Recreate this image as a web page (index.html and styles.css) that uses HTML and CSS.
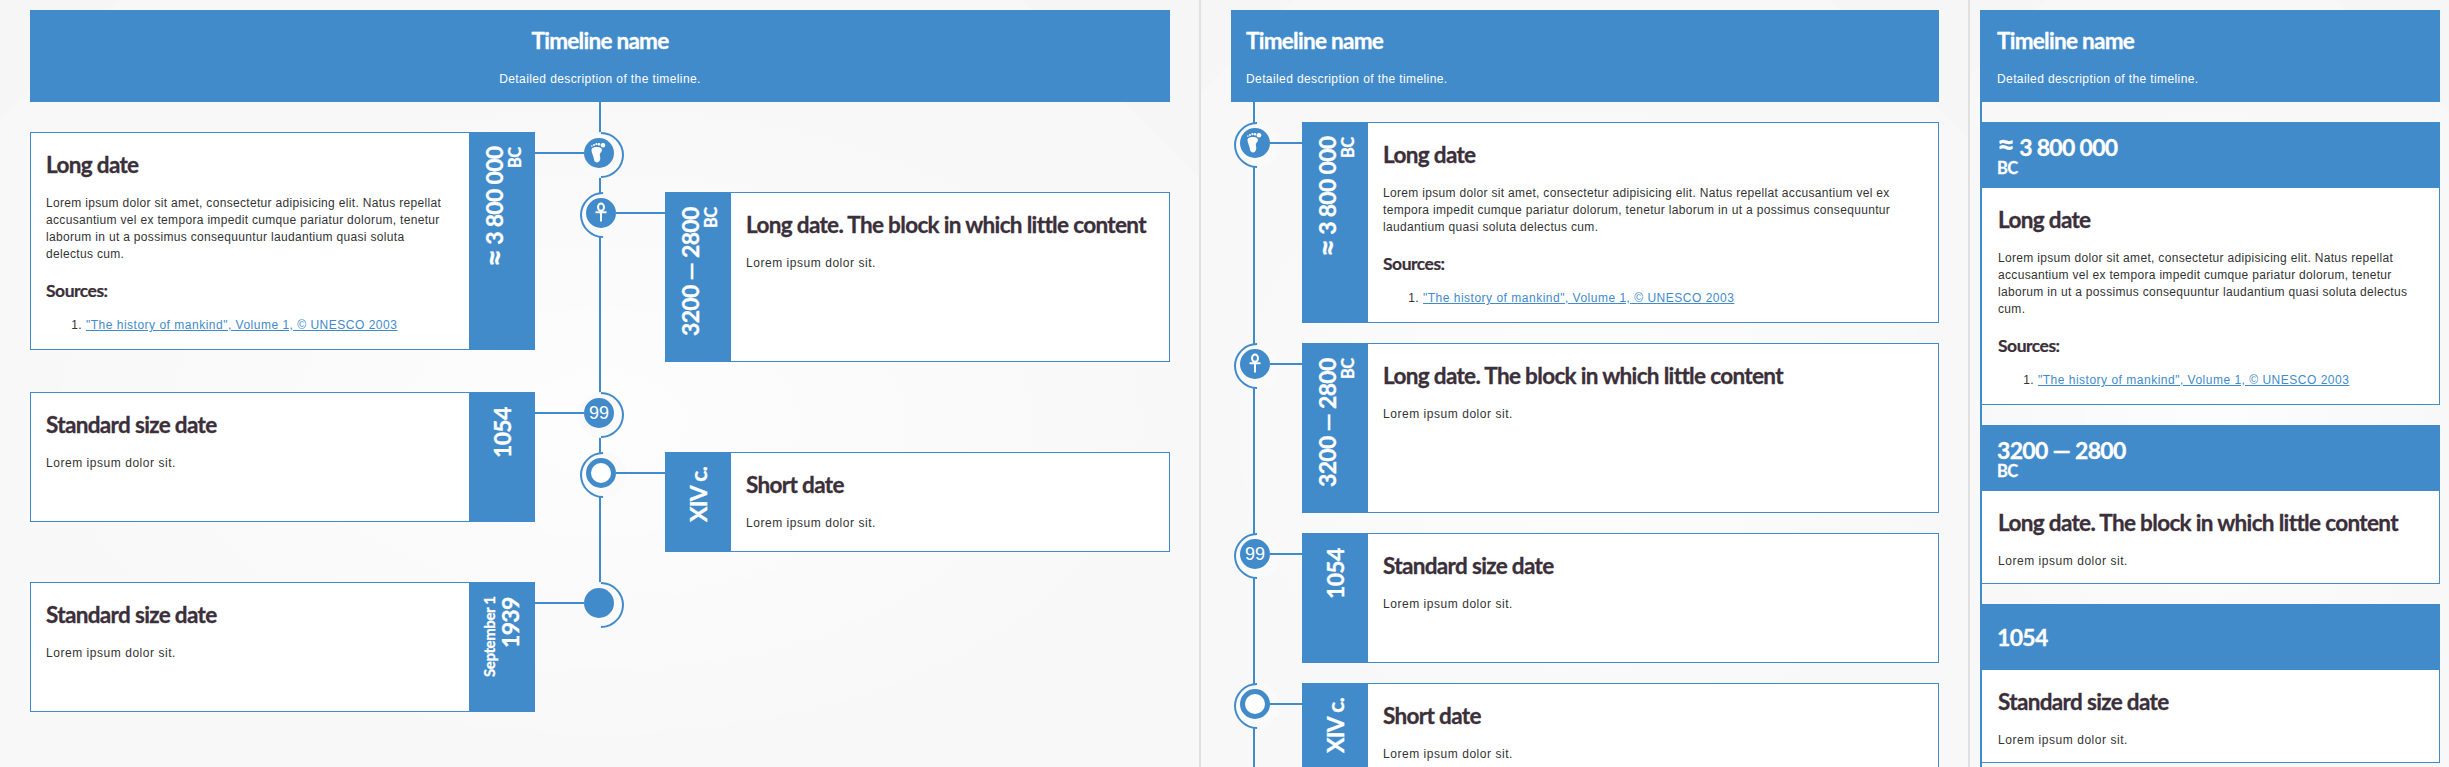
FILE: index.html
```html
<!DOCTYPE html>
<html lang="en">
<head>
<meta charset="utf-8">
<title>Timeline</title>
<link rel="stylesheet" href="styles.css">
</head>
<body>
<div class="app">

<section class="panel panel-wide">
  <header class="tl-head tl-head-center">
    <h1>Timeline name</h1>
    <p>Detailed description of the timeline.</p>
  </header>
  <div class="tl tl-two">
    <div class="tl-line tl-line-short"></div>
    <div class="col">
      <article class="event">
        <div class="card">
          <div class="body">
            <h2>Long date</h2>
            <p>Lorem ipsum dolor sit amet, consectetur adipisicing elit. Natus repellat accusantium vel ex tempora impedit cumque pariatur dolorum, tenetur laborum in ut a possimus consequuntur laudantium quasi soluta delectus cum.</p>
            <h3>Sources:</h3>
            <ol><li><a href="#">"The history of mankind", Volume 1, © UNESCO 2003</a></li></ol>
          </div>
          <div class="date"><span class="main"><b class="approx">≈</b> 3 800 000</span><span class="sub">BC</span></div>
        </div>
        <div class="node"><span class="disc"><svg class="ico" viewBox="0 0 30 30"><path d="M7.5 12C7.5 9.5 11 9 13.5 9C16 9 18 10 18 12C18 14 16 14.6 15.8 16.6C15.6 18 16.6 19.5 16.2 21.2C15.8 23.2 14.4 24.5 12.8 24.4C10.8 24.3 10 22.5 9.8 20.5C9.6 18 7.5 15 7.5 12Z"/><circle cx="19" cy="7.2" r="2.3"/><circle cx="15" cy="6.2" r="1.3"/><circle cx="12.4" cy="6.2" r="1.1"/><circle cx="10" cy="6.9" r="1"/><circle cx="7.9" cy="8.1" r=".8"/></svg></span></div>
      </article>
      <article class="event gap-42 h-130">
        <div class="card">
          <div class="body"><h2>Standard size date</h2><p class="short">Lorem ipsum dolor sit.</p></div>
          <div class="date"><span class="main">1054</span></div>
        </div>
        <div class="node"><span class="disc disc-num">99</span></div>
      </article>
      <article class="event gap-60 h-130">
        <div class="card">
          <div class="body"><h2>Standard size date</h2><p class="short">Lorem ipsum dolor sit.</p></div>
          <div class="date date-day"><span class="sub">September 1</span><span class="main">1939</span></div>
        </div>
        <div class="node"><span class="disc"></span></div>
      </article>
    </div>
    <div class="col col-right">
      <article class="event event-right h-170">
        <div class="card">
          <div class="date"><span class="main">3200 — 2800</span><span class="sub">BC</span></div>
          <div class="body"><h2>Long date. The block in which little content</h2><p class="short">Lorem ipsum dolor sit.</p></div>
        </div>
        <div class="node"><span class="disc"><svg class="ico ico-ankh" viewBox="0 0 30 30"><ellipse cx="15" cy="9.2" rx="3" ry="3.6"/><path d="M9.5 14.2H20.5M15 12V23.5"/></svg></span></div>
      </article>
      <article class="event event-right gap-90 h-100">
        <div class="card">
          <div class="date"><span class="main">XIV c.</span></div>
          <div class="body"><h2>Short date</h2><p class="short">Lorem ipsum dolor sit.</p></div>
        </div>
        <div class="node"><span class="disc disc-open"></span></div>
      </article>
    </div>
  </div>
</section>

<section class="panel panel-mid">
  <header class="tl-head">
    <h1>Timeline name</h1>
    <p>Detailed description of the timeline.</p>
  </header>
  <div class="tl tl-one">
    <div class="tl-line"></div>
    <article class="event event-right">
      <div class="card">
        <div class="date"><span class="main"><b class="approx">≈</b> 3 800 000</span><span class="sub">BC</span></div>
        <div class="body">
          <h2>Long date</h2>
          <p>Lorem ipsum dolor sit amet, consectetur adipisicing elit. Natus repellat accusantium vel ex tempora impedit cumque pariatur dolorum, tenetur laborum in ut a possimus consequuntur laudantium quasi soluta delectus cum.</p>
          <h3>Sources:</h3>
          <ol><li><a href="#">"The history of mankind", Volume 1, © UNESCO 2003</a></li></ol>
        </div>
      </div>
      <div class="node"><span class="disc"><svg class="ico" viewBox="0 0 30 30"><path d="M7.5 12C7.5 9.5 11 9 13.5 9C16 9 18 10 18 12C18 14 16 14.6 15.8 16.6C15.6 18 16.6 19.5 16.2 21.2C15.8 23.2 14.4 24.5 12.8 24.4C10.8 24.3 10 22.5 9.8 20.5C9.6 18 7.5 15 7.5 12Z"/><circle cx="19" cy="7.2" r="2.3"/><circle cx="15" cy="6.2" r="1.3"/><circle cx="12.4" cy="6.2" r="1.1"/><circle cx="10" cy="6.9" r="1"/><circle cx="7.9" cy="8.1" r=".8"/></svg></span></div>
    </article>
    <article class="event event-right gap-20 h-170">
      <div class="card">
        <div class="date"><span class="main">3200 — 2800</span><span class="sub">BC</span></div>
        <div class="body"><h2>Long date. The block in which little content</h2><p class="short">Lorem ipsum dolor sit.</p></div>
      </div>
      <div class="node"><span class="disc"><svg class="ico ico-ankh" viewBox="0 0 30 30"><ellipse cx="15" cy="9.2" rx="3" ry="3.6"/><path d="M9.5 14.2H20.5M15 12V23.5"/></svg></span></div>
    </article>
    <article class="event event-right gap-20 h-130">
      <div class="card">
        <div class="date"><span class="main">1054</span></div>
        <div class="body"><h2>Standard size date</h2><p class="short">Lorem ipsum dolor sit.</p></div>
      </div>
      <div class="node"><span class="disc disc-num">99</span></div>
    </article>
    <article class="event event-right gap-20 h-100">
      <div class="card">
        <div class="date"><span class="main">XIV c.</span></div>
        <div class="body"><h2>Short date</h2><p class="short">Lorem ipsum dolor sit.</p></div>
      </div>
      <div class="node"><span class="disc disc-open"></span></div>
    </article>
  </div>
</section>

<section class="panel panel-narrow">
  <header class="tl-head">
    <h1>Timeline name</h1>
    <p>Detailed description of the timeline.</p>
  </header>
  <div class="tl tl-stack">
    <article class="event">
      <div class="card">
        <div class="date"><span class="main"><b class="approx">≈</b> 3 800 000</span><span class="sub">BC</span></div>
        <div class="body">
          <h2>Long date</h2>
          <p>Lorem ipsum dolor sit amet, consectetur adipisicing elit. Natus repellat accusantium vel ex tempora impedit cumque pariatur dolorum, tenetur laborum in ut a possimus consequuntur laudantium quasi soluta delectus cum.</p>
          <h3>Sources:</h3>
          <ol><li><a href="#">"The history of mankind", Volume 1, © UNESCO 2003</a></li></ol>
        </div>
      </div>
    </article>
    <article class="event">
      <div class="card">
        <div class="date"><span class="main">3200 — 2800</span><span class="sub">BC</span></div>
        <div class="body"><h2>Long date. The block in which little content</h2><p class="short">Lorem ipsum dolor sit.</p></div>
      </div>
    </article>
    <article class="event">
      <div class="card">
        <div class="date"><span class="main">1054</span></div>
        <div class="body"><h2>Standard size date</h2><p class="short">Lorem ipsum dolor sit.</p></div>
      </div>
    </article>
  </div>
</section>

</div>
</body>
</html>
```
FILE: styles.css
```css
:root { --blue: #428bca; --ink: #3b2f3a; --bg: #fafafa; }
* { box-sizing: border-box; }
html, body { margin: 0; height: 100%; overflow: hidden; }
body { font-family: "Liberation Sans", Arial, sans-serif; font-size: 12px; color: #333; background: var(--bg); }
.app { display: flex; height: 767px; overflow: hidden; }

.panel {
  height: 767px; padding-top: 10px; overflow: hidden; flex: none;
  background-color: #f8f8f8;
  background-image:
    radial-gradient(ellipse 50% 45% at 50% 55%, rgba(255,255,255,.75), rgba(255,255,255,0) 100%),
    linear-gradient(135deg, #f6f6f6 0 6%, rgba(246,246,246,0) 6.1%),
    linear-gradient(225deg, #f6f6f6 0 9%, rgba(246,246,246,0) 9.1%);
}
.panel-wide { width: 1201px; padding-left: 30px; padding-right: 29px; border-right: 2px solid #e0e0e0; }
.panel-mid { width: 769px; padding-left: 30px; padding-right: 29px; border-right: 2px solid #e0e0e0; }
.panel-narrow { width: 479px; padding-left: 10px; padding-right: 9px; }

.tl-head { height: 92px; background: var(--blue); color: #fff; padding: 17px 15px 0; }
.panel-narrow .tl-head { padding-left: 17px; }
.tl-head-center { text-align: center; }
.tl-head h1 { margin: 0; font: 700 22.5px/28px Lato, sans-serif; letter-spacing: -.72px; -webkit-text-stroke: .3px #fff; }
.tl-head p { margin: 16px 0 0; font-size: 12px; line-height: 17px; letter-spacing: .4px; }

.tl { position: relative; }
.tl-line { position: absolute; top: 0; bottom: 0; width: 2px; background: var(--blue); }
.tl-two { display: flex; justify-content: space-between; }
.tl-two .tl-line { left: 569px; }
.tl-line-short { bottom: auto; height: 481px; }
.tl-one { padding: 20px 0 0 71px; height: 665px; }
.tl-one .tl-line { left: 22px; }
.tl-stack { border-left: 2px solid var(--blue); height: 665px; padding: 20px 0 0 0; }

.col { width: 505px; padding-top: 30px; }
.col-right { padding-top: 90px; }

.event { position: relative; z-index: 1; }
.gap-20 { margin-top: 20px; }
.gap-42 { margin-top: 42px; }
.gap-60 { margin-top: 60px; }
.gap-90 { margin-top: 90px; }
.h-100 .card { height: 100px; }
.h-130 .card { height: 130px; }
.h-170 .card { height: 170px; }
.tl-stack .event + .event { margin-top: 20px; }

.card { display: flex; border: 1px solid var(--blue); background: #fff; }
.body { flex: 1; min-width: 0; padding: 17px 14px 12px 15px; }
.event-right .body { padding-left: 15px; padding-right: 15px; }
.body h2 { margin: 0; font: 700 22.5px/30px Lato, sans-serif; letter-spacing: -.66px; color: var(--ink); -webkit-text-stroke: .3px var(--ink); }
.body p { margin: 15px 0 0; font-size: 12px; line-height: 17px; letter-spacing: .32px; }
.body p.short { letter-spacing: .54px; }
.body h3 { margin: 17px 0 0; font: 700 17.5px/22px Lato, sans-serif; letter-spacing: -.5px; color: var(--ink); -webkit-text-stroke: .2px var(--ink); }
.body ol { margin: 15px 0 3px; padding: 0 0 0 40px; font-size: 12px; line-height: 17px; letter-spacing: .5px; }
.body a { color: var(--blue); text-decoration: underline; }

.date {
  flex: none; width: 66px; margin: -1px -1px -1px 0; background: var(--blue); color: #fff;
  padding: 15px 0; display: flex; flex-direction: column; justify-content: center; align-items: flex-end;
  font-family: Lato, sans-serif; font-weight: 700; -webkit-text-stroke: .3px #fff;
  writing-mode: vertical-rl; transform: rotate(180deg);
}
.event-right .date { margin: -1px 0 -1px -1px; }
.date span { display: block; white-space: nowrap; }
.main { font-size: 23px; line-height: 26px; letter-spacing: -.7px; }
.approx { font-size: 31px; line-height: 0; font-weight: 700; }
.sub { font-size: 16.5px; line-height: 16px; letter-spacing: -.5px; }
.date-day .sub { font-size: 15px; letter-spacing: -.4px; }

.tl-stack .card { display: block; border-left: 0; }
.tl-stack .date {
  width: auto; height: 66px; margin: -1px -1px 0 0; padding: 0 0 0 15px;
  writing-mode: horizontal-tb; transform: none;
  justify-content: center; align-items: flex-start;
}
.tl-stack .body { padding: 17px 15px 13px 16px; }
.tl-stack .body ol { margin-bottom: 2px; }

.node { position: absolute; top: 6px; left: calc(100% + 49px); width: 30px; height: 30px; }
.event-right .node { left: auto; right: calc(100% + 49px); }
.panel-mid .event-right .node { right: calc(100% + 32px); }
.node::before {
  content: ""; position: absolute; left: -6px; top: -6px; width: 42px; height: 42px; border-radius: 50%;
  background: var(--bg); border: 2px solid; border-color: var(--blue) var(--blue) transparent transparent;
  transform: rotate(45deg);
}
.event-right .node::before { transform: rotate(-135deg); }
.node::after { content: ""; position: absolute; top: 14px; right: 100%; width: 49px; height: 2px; background: var(--blue); }
.event-right .node::after { right: auto; left: 100%; }
.panel-mid .node::after { width: 32px; }

.disc { position: absolute; inset: 0; z-index: 1; border-radius: 50%; background: var(--blue); display: flex; align-items: center; justify-content: center; color: #fff; }
.disc-num { font-size: 18px; line-height: 30px; letter-spacing: 0; }
.disc-open { background: #fff; border: 5px solid var(--blue); }
.ico { display: block; width: 30px; height: 30px; fill: #fff; flex: none; }
.ico-ankh { fill: none; stroke: #fff; stroke-width: 2; }
```
